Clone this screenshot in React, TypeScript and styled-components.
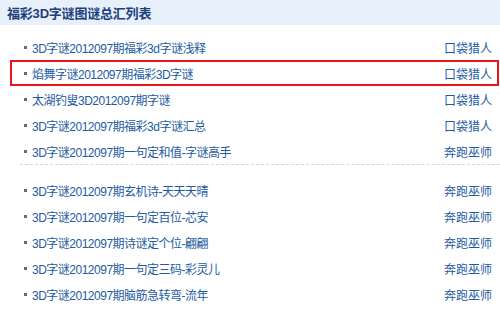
import React, { FC } from 'react'
import styled, { createGlobalStyle } from 'styled-components'

type Item = {
  title: string
  author: string
  active?: boolean
}

const GROUP_A: Item[] = [
  { title: '3D字谜2012097期福彩3d字谜浅释', author: '口袋猎人' },
  { title: '焰舞字谜2012097期福彩3D字谜', author: '口袋猎人', active: true },
  { title: '太湖钓叟3D2012097期字谜', author: '口袋猎人' },
  { title: '3D字谜2012097期福彩3d字谜汇总', author: '口袋猎人' },
  { title: '3D字谜2012097期一句定和值-字谜高手', author: '奔跑巫师' },
]

const GROUP_B: Item[] = [
  { title: '3D字谜2012097期玄机诗-天天天晴', author: '奔跑巫师' },
  { title: '3D字谜2012097期一句定百位-芯安', author: '奔跑巫师' },
  { title: '3D字谜2012097期诗谜定个位-翩翩', author: '奔跑巫师' },
  { title: '3D字谜2012097期一句定三码-彩灵儿', author: '奔跑巫师' },
  { title: '3D字谜2012097期脑筋急转弯-流年', author: '奔跑巫师' },
]

const GlobalStyle = createGlobalStyle`
  html, body {
    margin: 0;
    padding: 0;
    background: #ffffff;
  }
  body {
    font-family: "Liberation Sans", "Noto Sans CJK SC", sans-serif;
  }
`

const SPanel = styled.div`
  width: 500px;
  height: 312px;
  overflow: hidden;
  background: #ffffff;
`
const SHeader = styled.div`
  height: 25px;
  display: flex;
  align-items: center;
  padding-left: 7px;
  background-color: #e8f0fb;
`
const STitle = styled.h2`
  margin: 0;
  font-size: 13px;
  font-weight: bold;
  color: #1b3f7c;
  letter-spacing: -0.2px;
`
const SList = styled.ul`
  list-style: none;
  margin: 0;
  padding: 0 3px 0 12px;
`
const SGroup = styled.div<{ $first?: boolean }>`
  padding-top: ${(p) => (p.$first ? '9px' : '12px')};
`
const SRow = styled.li<{ $active?: boolean }>`
  height: 26px;
  box-sizing: border-box;
  display: flex;
  align-items: center;
  justify-content: space-between;
  padding: 0 5px 0 12px;
  border: 2px solid ${(p) => (p.$active ? '#e8161b' : 'transparent')};
  margin: 0 -2px;
  font-size: 12px;
  color: #1e5ba3;
`
const SBullet = styled.span`
  width: 3px;
  height: 3px;
  margin-right: 5px;
  background-color: #6a6a6a;
  flex-shrink: 0;
`
const SLink = styled.a`
  flex: 1;
  display: flex;
  align-items: center;
  color: inherit;
  text-decoration: none;
  letter-spacing: -0.5px;
`
const SAuthor = styled.span`
  color: #1e5ba3;
`
const SDivider = styled.div`
  margin: 0 -3px 0 8px;
  border-top: 1px dashed #d4d4d4;
`

const Row: FC<{ item: Item }> = ({ item }) => (
  <SRow $active={item.active}>
    <SLink href="#">
      <SBullet />
      {item.title}
    </SLink>
    <SAuthor>{item.author}</SAuthor>
  </SRow>
)

export default function App() {
  return (
    <SPanel>
      <GlobalStyle />
      <SHeader>
        <STitle>福彩3D字谜图谜总汇列表</STitle>
      </SHeader>
      <SList>
        <SGroup $first>
          {GROUP_A.map((item) => (
            <Row key={item.title} item={item} />
          ))}
        </SGroup>
        <SDivider />
        <SGroup>
          {GROUP_B.map((item) => (
            <Row key={item.title} item={item} />
          ))}
        </SGroup>
      </SList>
    </SPanel>
  )
}
